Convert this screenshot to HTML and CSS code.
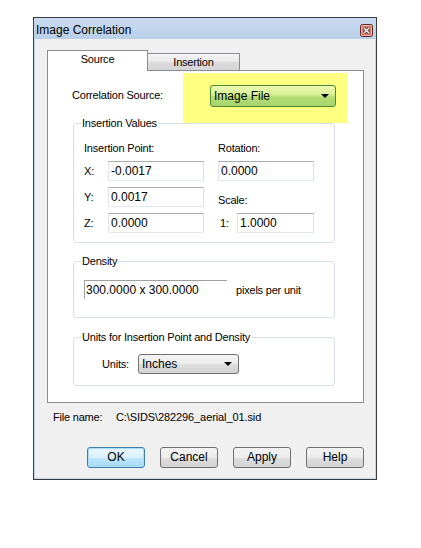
FILE: index.html
```html
<!DOCTYPE html>
<html>
<head>
<meta charset="utf-8">
<title>Image Correlation</title>
<link rel="stylesheet" href="styles.css">
</head>
<body>
<div class="dialog">
  <div class="titlebar">
    <span class="title">Image Correlation</span>
    <span class="close">
      <svg width="13" height="13" viewBox="0 0 13 13">
        <rect x="0.5" y="0.5" width="12" height="12" rx="2" fill="#d97a6e" stroke="#5b2a27"/>
        <rect x="1.5" y="1.5" width="10" height="10" rx="1" fill="none" stroke="#efb3a8"/>
        <path d="M4 4l5 5M9 4l-5 5" stroke="#4a2220" stroke-width="3"/>
        <path d="M4 4l5 5M9 4l-5 5" stroke="#fff" stroke-width="1.5"/>
      </svg>
    </span>
  </div>
  <div class="client">
    <div class="tabs">
      <div class="tab active">Source</div>
      <div class="tab">Insertion</div>
    </div>
    <div class="panel">
      <div class="source-row">
        <span class="source-label">Correlation Source:</span>
        <div class="highlight">
          <div class="combo green"><span>Image File</span><span class="arrow"></span></div>
        </div>
      </div>
      <fieldset class="group">
        <legend>Insertion Values</legend>
        <div class="ins-grid">
          <div class="cell">Insertion Point:</div>
          <div class="cell">Rotation:</div>
          <div class="cell field"><span class="axis">X:</span><span class="input w96">-0.0017</span></div>
          <div class="cell field"><span class="input w96">0.0000</span></div>
          <div class="cell field"><span class="axis">Y:</span><span class="input w96">0.0017</span></div>
          <div class="cell scale">Scale:</div>
          <div class="cell field"><span class="axis">Z:</span><span class="input w96">0.0000</span></div>
          <div class="cell field"><span class="one">1:</span><span class="input w77">1.0000</span></div>
        </div>
      </fieldset>
      <fieldset class="group density">
        <legend>Density</legend>
        <div class="density-row">
          <span class="density-input">300.0000 x 300.0000</span>
          <span class="ppu">pixels per unit</span>
        </div>
      </fieldset>
      <fieldset class="group units">
        <legend>Units for Insertion Point and Density</legend>
        <div class="units-row">
          <span class="units-label">Units:</span>
          <div class="combo gray"><span>Inches</span><span class="arrow"></span></div>
        </div>
      </fieldset>
    </div>
    <div class="filename">
      <span class="fn-label">File name:</span>
      <span class="fn-path">C:\SIDS\282296_aerial_01.sid</span>
    </div>
    <div class="buttons">
      <div class="btn default">OK</div>
      <div class="btn">Cancel</div>
      <div class="btn">Apply</div>
      <div class="btn">Help</div>
    </div>
  </div>
</div>
</body>
</html>
```
FILE: styles.css
```css
body {
  margin: 0;
  background: #fff;
  font-family: "Liberation Sans", Arial, sans-serif;
  font-size: 11px;
  letter-spacing: -0.2px;
  color: #000;
}

.dialog {
  margin: 17px 0 0 33px;
  width: 344px;
  height: 463px;
  box-sizing: border-box;
  border: 1px solid #3d3d3d;
  display: flex;
  flex-direction: column;
  background: #f0f0f0;
}

.titlebar {
  height: 21px;
  flex: none;
  display: flex;
  justify-content: space-between;
  align-items: flex-start;
  background: linear-gradient(#c9dbf0, #b9cfe8);
}

.title {
  font-size: 12px;
  letter-spacing: 0;
  line-height: 14px;
  padding: 5px 0 0 2px;
}

.close {
  margin: 6px 3px 0 0;
  width: 13px;
  height: 13px;
  display: block;
}

.close svg {
  display: block;
}

.client {
  flex: 1;
  border: 1px solid #c3d6ec;
  border-top: none;
  padding: 11px 11px 0 12px;
}

.tabs {
  display: flex;
  align-items: flex-end;
  height: 20px;
  position: relative;
  z-index: 1;
}

.tab {
  box-sizing: border-box;
  border: 1px solid #898c95;
  border-bottom: none;
  text-align: center;
}

.tab.active {
  width: 101px;
  height: 21px;
  margin-bottom: -1px;
  background: #fff;
  line-height: 16px;
}

.tab:not(.active) {
  width: 93px;
  height: 17px;
  margin-left: -1px;
  line-height: 16px;
  background: linear-gradient(#f4f4f4, #e9e9e9 50%, #dcdcdc 51%, #d6d6d6);
}

.panel {
  box-sizing: border-box;
  height: 333px;
  border: 1px solid #898c95;
  background: #fff;
  padding: 2px 28px 0 25px;
}

.source-row {
  display: flex;
  align-items: flex-start;
}

.source-label {
  margin: 15px 0 0 -1px;
  line-height: 14px;
}

.highlight {
  margin-left: auto;
  margin-right: -12px;
  margin-bottom: -7px;
  background: #ffff80;
  padding: 12px 11px 16px 27px;
}

.combo {
  box-sizing: border-box;
  display: flex;
  align-items: center;
  justify-content: space-between;
  border-radius: 3px;
  letter-spacing: 0;
}

.combo.green {
  width: 126px;
  height: 22px;
  padding: 0 6px 0 3px;
  border: 1px solid #4d8a34;
  background: linear-gradient(#eef9b0, #d6ee95 45%, #b4dc76 55%, #a8d46c);
  font-size: 12px;
}

.combo.gray {
  width: 101px;
  height: 20px;
  padding: 0 6px 0 3px;
  border: 1px solid #707070;
  background: linear-gradient(#f3f3f3, #ececec 50%, #dedede 51%, #d3d3d3);
  font-size: 12px;
}

.arrow {
  width: 0;
  height: 0;
  border-left: 4px solid transparent;
  border-right: 4px solid transparent;
  border-top: 4px solid #000;
}

.group {
  margin: 0;
  padding: 0 0 0 10px;
  border: 1px solid #d5dfe5;
  border-radius: 3px;
  min-width: 0;
}

.group legend {
  padding: 0 1px;
  margin-left: -3px;
  line-height: 14px;
}

.ins-grid {
  display: grid;
  grid-template-columns: 120px 96px;
  grid-template-rows: 14px 20px 20px 20px;
  column-gap: 14px;
  row-gap: 6px;
  padding: 11px 0 9px 0;
}

.cell {
  line-height: 14px;
}

.field {
  display: flex;
  align-items: center;
}

.axis {
  width: 24px;
}

.one {
  margin-left: 2px;
  width: 17px;
}

.scale {
  align-self: end;
}

.input {
  box-sizing: border-box;
  height: 20px;
  border: 1px solid;
  border-color: #abadb3 #dbdfe6 #e3e9ef #e2e3ea;
  background: #fff;
  padding: 0 2px;
  line-height: 18px;
  font-size: 12px;
  letter-spacing: 0;
}

.w96 {
  width: 96px;
}

.w77 {
  width: 77px;
}

.density {
  margin-top: 11px;
}

.density-row {
  display: flex;
  align-items: center;
  padding: 12px 0 18px 0;
}

.density-input {
  box-sizing: border-box;
  width: 143px;
  height: 19px;
  border-top: 1px solid #a0a0a0;
  border-left: 1px solid #a0a0a0;
  padding-left: 1px;
  line-height: 18px;
  font-size: 12px;
  letter-spacing: 0;
}

.ppu {
  margin-left: 9px;
}

.units {
  margin-top: 12px;
}

.units-row {
  display: flex;
  align-items: center;
  padding: 10px 0 11px 18px;
}

.units-label {
  width: 36px;
}

.filename {
  display: flex;
  margin-top: 7px;
  padding-left: 6px;
  line-height: 14px;
}

.fn-label {
  width: 63px;
}

.fn-path {
  letter-spacing: -0.1px;
}

.buttons {
  display: flex;
  justify-content: flex-end;
  gap: 15px;
  margin-top: 23px;
}

.btn {
  box-sizing: border-box;
  width: 58px;
  height: 21px;
  border: 1px solid #707070;
  border-radius: 3px;
  background: linear-gradient(#f3f3f3, #ececec 50%, #dedede 51%, #d3d3d3);
  text-align: center;
  line-height: 19px;
  font-size: 12px;
  letter-spacing: 0;
}

.btn.default {
  border-color: #3c7fb1;
  background: linear-gradient(#eaf6fd, #d9f0fc 50%, #bee6fd 51%, #a7d9f5);
  box-shadow: inset 0 0 0 1px #a6e0f8;
}
```
